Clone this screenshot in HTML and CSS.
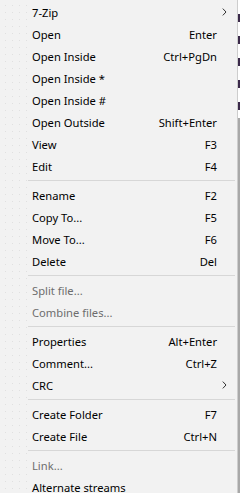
FILE: index.html
```html
<!DOCTYPE html>
<html lang="en">
<head>
  <meta charset="UTF-8">
  <meta name="viewport" content="width=device-width, initial-scale=1.0">
  <title>7-Zip context menu</title>
  <link rel="stylesheet" href="styles.css">
</head>
<body>
  <div class="screen">
    <!-- context menu -->
    <ul class="menu">
      <li class="item has-sub"><span class="label">7-Zip</span>
        <svg class="arrow" width="5" height="8" viewBox="0 0 5 8"><path d="M0.8 0.6 L4 4 L0.8 7.4" fill="none" stroke="#333" stroke-width="1"/></svg>
      </li>
      <li class="item"><span class="label">Open</span><span class="key">Enter</span></li>
      <li class="item"><span class="label">Open Inside</span><span class="key">Ctrl+PgDn</span></li>
      <li class="item"><span class="label">Open Inside *</span></li>
      <li class="item"><span class="label">Open Inside #</span></li>
      <li class="item"><span class="label">Open Outside</span><span class="key">Shift+Enter</span></li>
      <li class="item"><span class="label">View</span><span class="key">F3</span></li>
      <li class="item"><span class="label">Edit</span><span class="key">F4</span></li>
      <li class="sep"></li>
      <li class="item"><span class="label">Rename</span><span class="key">F2</span></li>
      <li class="item"><span class="label">Copy To...</span><span class="key">F5</span></li>
      <li class="item"><span class="label">Move To...</span><span class="key">F6</span></li>
      <li class="item"><span class="label">Delete</span><span class="key">Del</span></li>
      <li class="sep"></li>
      <li class="item disabled"><span class="label">Split file...</span></li>
      <li class="item disabled"><span class="label">Combine files...</span></li>
      <li class="sep"></li>
      <li class="item"><span class="label">Properties</span><span class="key">Alt+Enter</span></li>
      <li class="item"><span class="label">Comment...</span><span class="key">Ctrl+Z</span></li>
      <li class="item has-sub"><span class="label">CRC</span>
        <svg class="arrow" width="5" height="8" viewBox="0 0 5 8"><path d="M0.8 0.6 L4 4 L0.8 7.4" fill="none" stroke="#333" stroke-width="1"/></svg>
      </li>
      <li class="sep"></li>
      <li class="item"><span class="label">Create Folder</span><span class="key">F7</span></li>
      <li class="item"><span class="label">Create File</span><span class="key">Ctrl+N</span></li>
      <li class="sep"></li>
      <li class="item disabled"><span class="label">Link...</span></li>
      <li class="item"><span class="label">Alternate streams</span></li>
    </ul>
    <!-- window behind the menu -->
    <div class="backdrop"></div>
  </div>
</body>
</html>
```

FILE: styles.css
```css
* {
  margin: 0;
  padding: 0;
  box-sizing: border-box;
}

body {
  font-family: 'Noto Sans', 'Open Sans', sans-serif;
  font-size: 11.2px;
  color: #000;
  background: #f2f2f2;
  width: 240px;
  height: 493px;
  overflow: hidden;
}

.screen {
  display: flex;
  height: 493px;
}

.menu {
  list-style: none;
  width: 238px;
  height: 493px;
  padding-top: 1px;
  border-right: 1px solid #cdcdcd;
  background:
    linear-gradient(to right, transparent 28px, #f2f2f2 28px),
    radial-gradient(circle, #e0e0e0 0.7px, transparent 1px) 2px 2px / 7px 7px,
    #f2f2f2;
}

.item {
  display: flex;
  align-items: center;
  height: 22px;
  padding: 0 20px 0 32px;
  white-space: nowrap;
}

.item .label {
  flex: 1;
}

.item .key {
  text-align: right;
}

.has-sub {
  padding-right: 10px;
}

.arrow {
  display: block;
}

.disabled {
  color: #6d6d6d;
}

.sep {
  height: 1px;
  margin: 3px 2px 3px 28px;
  background: #d7d7d7;
}

.backdrop {
  flex: 1;
  background:
    repeating-linear-gradient(to bottom, #fff 0, #fff 14px, #3b2a4a 14px, #3b2a4a 22px) 0 0 / 100% 118px no-repeat,
    #a8a8a8;
}
```
